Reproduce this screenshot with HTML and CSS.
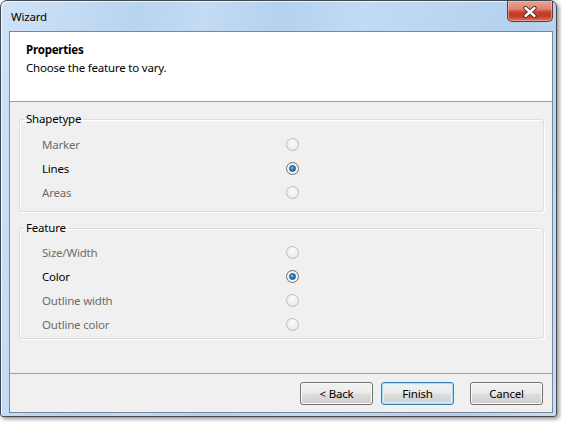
FILE: index.html
```html
<!DOCTYPE html>
<html>
<head>
<meta charset="utf-8">
<link rel="stylesheet" href="styles.css">
</head>
<body>
<div class="window">
  <div class="titlebar">
    <span class="title">Wizard</span>
    <div class="close">
      <svg width="14" height="12" viewBox="0 0 14 12">
        <path d="M2.5 2 L11.5 10 M11.5 2 L2.5 10" stroke="#4a2420" stroke-width="4.2" stroke-linecap="round"/>
        <path d="M2.5 2 L11.5 10 M11.5 2 L2.5 10" stroke="#ffffff" stroke-width="2.4" stroke-linecap="round"/>
      </svg>
    </div>
  </div>
  <div class="client">
    <div class="header">
      <div class="h-title">Properties</div>
      <div class="h-desc">Choose the feature to vary.</div>
    </div>
    <div class="content">
      <fieldset class="group g1">
        <legend>Shapetype</legend>
        <div class="row disabled"><span class="label">Marker</span><span class="radio"></span></div>
        <div class="row"><span class="label">Lines</span><span class="radio checked"></span></div>
        <div class="row disabled"><span class="label">Areas</span><span class="radio"></span></div>
      </fieldset>
      <fieldset class="group g2">
        <legend>Feature</legend>
        <div class="row disabled"><span class="label">Size/Width</span><span class="radio"></span></div>
        <div class="row"><span class="label">Color</span><span class="radio checked"></span></div>
        <div class="row disabled"><span class="label">Outline width</span><span class="radio"></span></div>
        <div class="row disabled"><span class="label">Outline color</span><span class="radio"></span></div>
      </fieldset>
    </div>
    <div class="buttons">
      <button class="btn">&lt; Back</button>
      <button class="btn default">Finish</button>
      <button class="btn cancel">Cancel</button>
    </div>
  </div>
</div>
</body>
</html>
```
FILE: styles.css
```css
html, body {
  margin: 0;
  padding: 0;
  background: #ffffff;
}
body {
  width: 562px;
  height: 422px;
  overflow: hidden;
  font-family: "Noto Sans", "Open Sans", sans-serif;
  font-size: 11.5px;
  letter-spacing: -0.2px;
  color: #000;
}
.window {
  box-sizing: border-box;
  width: 557px;
  height: 417px;
  border: 1px solid #3f4a55;
  border-radius: 7px 7px 3px 3px;
  padding: 0 3px 3px 8px;
  display: flex;
  flex-direction: column;
  background: linear-gradient(100deg, #cfe3f7 0%, #b9d4ef 22%, #c3dbf3 33%, #b5d1ee 45%, #c2dbf4 58%, #bcd6f1 70%, #b4d0ec 85%, #c9dff4 100%);
  box-shadow: 2px 2px 4px rgba(0, 0, 0, 0.45), inset 1px 1px 0 rgba(255,255,255,0.7);
}
.titlebar {
  height: 30px;
  display: flex;
  align-items: flex-start;
  margin-left: -7px;
}
.title {
  margin-left: 9px;
  margin-top: 7px;
  line-height: 17px;
  color: #000;
}
.close {
  margin-left: auto;
  margin-right: 0px;
  width: 44px;
  height: 20px;
  border: 1px solid #6b3530;
  border-top: none;
  border-radius: 0 0 5px 5px;
  background: linear-gradient(#eaa494 0%, #dc8470 40%, #c8442f 55%, #c03a26 75%, #d5785f 100%);
  display: flex;
  align-items: center;
  justify-content: center;
  box-shadow: inset 0 0 0 1px rgba(255, 200, 190, 0.5);
}
.close svg { display: block; margin-top: 1px; }
.client {
  flex: 1;
  display: flex;
  flex-direction: column;
  border: 1px solid #7b8796;
  background: #f0f0f0;
}
.header {
  background: #ffffff;
  border-bottom: 1px solid #a0a0a0;
  padding: 9px 16px 24px 16px;
  line-height: 18px;
}
.h-title { font-weight: bold; }
.content {
  flex: 1;
  display: flex;
  flex-direction: column;
  padding: 0 8px 0 9px;
}
.group {
  margin: 0;
  padding: 0;
  border: 1px solid #d5dfe5;
  border-radius: 3px;
  box-shadow: inset 1px 1px 0 #ffffff, 1px 1px 0 #ffffff;
}
.group legend {
  margin-left: 4px;
  padding: 0 2px;
  line-height: 16px;
  color: #000;
}
.g1 { margin-top: 9px; padding-top: 5px; padding-bottom: 7px; }
.g2 { margin-top: 8px; padding-top: 4px; padding-bottom: 2px; }
.row {
  display: grid;
  grid-template-columns: 244px 13px;
  align-items: center;
  height: 24px;
  padding-left: 22px;
}
.row.disabled .label { color: #6d6d6d; }
.radio {
  box-sizing: border-box;
  width: 13px;
  height: 13px;
  border-radius: 50%;
  border: 1px solid #bcbcbc;
  background: radial-gradient(circle at 50% 35%, #fbfbfb 0%, #eeeeee 60%, #e0e0e0 100%);
  display: flex;
  align-items: center;
  justify-content: center;
}
.radio.checked {
  border-color: #6f6f6f;
  background: radial-gradient(circle, #ffffff 0%, #f2f2f2 70%, #e0e0e0 100%);
}
.radio.checked::after {
  content: "";
  box-sizing: border-box;
  width: 7px;
  height: 7px;
  border-radius: 50%;
  border: 1px solid #1b4a72;
  background: radial-gradient(circle at 40% 35%, #7cc6f5 0%, #2a82c4 45%, #125a95 100%);
}
.buttons {
  border-top: 1px solid #a0a0a0;
  display: flex;
  justify-content: flex-end;
  padding: 8px 9px 7px 0;
}
.btn {
  box-sizing: border-box;
  width: 73px;
  height: 23px;
  margin: 0 0 0 8px;
  padding: 0;
  font-family: "Noto Sans", "Open Sans", sans-serif;
  font-size: 11.5px;
  letter-spacing: -0.2px;
  color: #000;
  border: 1px solid #707070;
  border-radius: 3px;
  background: linear-gradient(#f2f2f2 0%, #ebebeb 48%, #dddddd 52%, #cfcfcf 100%);
  box-shadow: inset 0 0 0 1px #fcfcfc;
}
.btn.default {
  border-color: #3c7fb1;
  box-shadow: inset 0 0 0 1px #a6dcf4, inset 0 0 0 2px #dff2fc;
}
.btn.cancel { margin-left: 16px; }
```
